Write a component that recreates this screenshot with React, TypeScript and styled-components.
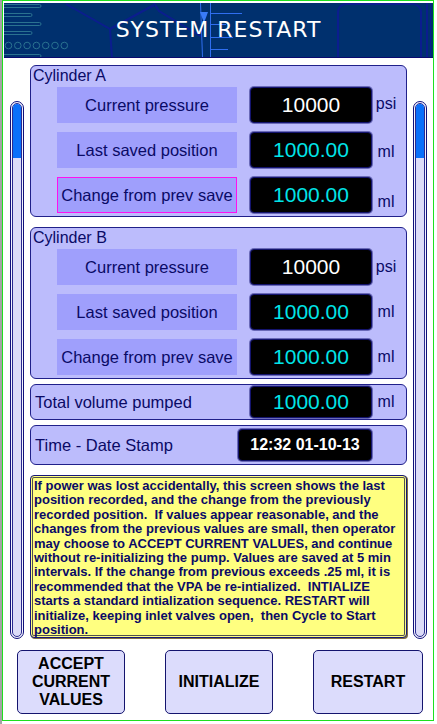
import React from "react"
import styled, { createGlobalStyle } from "styled-components"

const GlobalStyle = createGlobalStyle`
	html, body {
		margin: 0;
		padding: 0;
		background: #ffffff;
	}
	body {
		font-family: "Liberation Sans", Arial, sans-serif;
	}
	* {
		box-sizing: border-box;
	}
`

const NAVY = "#0a0a66"

type Row = {
	label: string
	value: string
	unit: string
	kind: "pressure" | "volume"
	highlight?: boolean
	drop?: number
}

const cylinderA: Row[] = [
	{ label: "Current pressure", value: "10000", unit: "psi", kind: "pressure", drop: -2 },
	{ label: "Last saved position", value: "1000.00", unit: "ml", kind: "volume", drop: 3 },
	{ label: "Change from prev save", value: "1000.00", unit: "ml", kind: "volume", highlight: true, drop: 14 },
]

const cylinderB: Row[] = [
	{ label: "Current pressure", value: "10000", unit: "psi", kind: "pressure" },
	{ label: "Last saved position", value: "1000.00", unit: "ml", kind: "volume" },
	{ label: "Change from prev save", value: "1000.00", unit: "ml", kind: "volume" },
]

const noteLines = [
	"If power was lost accidentally, this screen shows the last",
	"position recorded, and the change from the previously",
	"recorded position.  If values appear reasonable, and the",
	"changes from the previous values are small, then operator",
	"may choose to ACCEPT CURRENT VALUES, and continue",
	"without re-initializing the pump. Values are saved at 5 min",
	"intervals. If the change from previous exceeds .25 ml, it is",
	"recommended that the VPA be re-intialized.  INTIALIZE",
	"starts a standard intialization sequence. RESTART will",
	"initialize, keeping inlet valves open,  then Cycle to Start",
	"position.",
]

const HeaderArt = () => (
	<svg width="429" height="54" viewBox="0 0 429 54">
		<g fill="none" stroke="#2a7290" strokeWidth="1">
			<rect x="-3" y="1.5" width="40" height="3" rx="1.5" />
			<rect x="-3" y="10.5" width="31" height="3" rx="1.5" />
			<rect x="-3" y="19.5" width="40" height="3" rx="1.5" />
			<rect x="-3" y="28.5" width="31" height="3" rx="1.5" />
			{[0, 1, 2, 3, 4, 5, 6].map((i) => (
				<circle key={i} cx={4.5 + i * 9.3} cy={42.5} r={3.3} />
			))}
			<rect x="-3" y="51.5" width="40" height="3" rx="1.5" />
		</g>
		<g fill="none" stroke="#0b1d8e" strokeWidth="2">
			<polyline points="62,1 106,26 108,55" />
			<polyline points="150,0 155,8 198,34" />
			<polyline points="106,26 150,2" />
			<rect x="334" y="1" width="83" height="60" rx="8" />
			<line x1="423" y1="0" x2="423" y2="54" />
			<line x1="426.5" y1="0" x2="426.5" y2="54" strokeWidth="1" />
		</g>
		<g stroke="#2f6ef0" strokeWidth="1" fill="none">
			<line x1="196.5" y1="0" x2="198.5" y2="54" />
			<line x1="206.5" y1="0" x2="206.5" y2="54" />
			<line x1="207" y1="10.5" x2="238" y2="10.5" />
			<line x1="207" y1="21.5" x2="222" y2="21.5" />
			<line x1="207" y1="34.5" x2="229" y2="34.5" />
			<line x1="207" y1="46.5" x2="224" y2="46.5" />
		</g>
		<polygon points="196,9 204,9 200,20" fill="#3a7cf8" />
	</svg>
)

const Cylinder = ({ title, rows }: { title: string; rows: Row[] }) => (
	<CylinderPanel>
		<PanelTitle>{title}</PanelTitle>
		<Rows>
			{rows.map((r) => (
				<ReadingRow key={r.label}>
					<LabelBox $highlight={r.highlight}>{r.label}</LabelBox>
					<ValueBox $width={122} $color={r.kind === "pressure" ? "#ffffff" : "#00e4e8"}>
						{r.value}
					</ValueBox>
					<Unit $drop={r.drop ?? 0}>{r.unit}</Unit>
				</ReadingRow>
			))}
		</Rows>
	</CylinderPanel>
)

export default function App() {
	return (
		<>
			<GlobalStyle />
			<Page>
				<Frame>
					<Header>
						<HeaderArt />
						<HeaderTitle>SYSTEM RESTART</HeaderTitle>
					</Header>
					<Body>
						<Scrollbar>
							<Track>
								<Thumb />
							</Track>
						</Scrollbar>
						<Content>
							<Cylinder title="Cylinder A" rows={cylinderA} />
							<Cylinder title="Cylinder B" rows={cylinderB} />
							<SummaryPanel $pad={1} $gap={5}>
								<SummaryLabel>Total volume pumped</SummaryLabel>
								<ValueBox $width={122} $color="#00e4e8">
									1000.00
								</ValueBox>
								<Unit $drop={0}>ml</Unit>
							</SummaryPanel>
							<SummaryPanel $pad={3} $gap={5}>
								<SummaryLabel>Time - Date Stamp</SummaryLabel>
								<StampBox>12:32 01-10-13</StampBox>
								<Unit $drop={0} />
							</SummaryPanel>
							<Note>
								{noteLines.map((line, i) => (
									<NoteLine key={i}>{line}</NoteLine>
								))}
							</Note>
						</Content>
						<Scrollbar>
							<Track>
								<Thumb />
							</Track>
						</Scrollbar>
					</Body>
					<ButtonRow>
						<ActionButton $width={108}>
							ACCEPT
							<br />
							CURRENT
							<br />
							VALUES
						</ActionButton>
						<ActionButton $width={108}>INITIALIZE</ActionButton>
						<ActionButton $width={110}>RESTART</ActionButton>
					</ButtonRow>
				</Frame>
			</Page>
		</>
	)
}

const Page = styled.div`
	width: 437px;
	height: 724px;
	border-left: 2px solid #a4a4a4;
	background: #ffffff;
`

const Frame = styled.div`
	width: 432px;
	height: 721px;
	border: 1px solid #1ee01e;
	display: flex;
	flex-direction: column;
`

const Header = styled.div`
	display: grid;
	width: 429px;
	height: 55px;
	margin: 2px 0 0 1px;
	background: #00306e;
	border-bottom: 1px solid #0a0a70;
	overflow: hidden;

	& > * {
		grid-area: 1 / 1;
	}
`

const HeaderTitle = styled.div`
	align-self: center;
	justify-self: center;
	font-family: "DejaVu Sans", Verdana, sans-serif;
	font-size: 22px;
	letter-spacing: 1px;
	color: #ffffff;
	line-height: 1;
`

const Body = styled.div`
	display: flex;
	align-items: flex-start;
	gap: 6px;
	margin-top: 7px;
	padding-left: 7px;
`

const Scrollbar = styled.div`
	width: 14px;
	height: 538px;
	margin-top: 36px;
	border: 1px solid #10107a;
	border-radius: 7px;
	background: #f4f4ff;
	padding: 1px;
`

const Track = styled.div`
	height: 100%;
	border: 1px solid #2a2a90;
	border-radius: 5px;
	background: #dcdcf8;
	overflow: hidden;
`

const Thumb = styled.div`
	height: 54px;
	background: #0a70fa;
`

const Content = styled.div`
	width: 377px;
	display: flex;
	flex-direction: column;
`

const Panel = styled.div`
	background: #bcbcfc;
	border: 1px solid #20208a;
	border-radius: 6px;
	color: ${NAVY};
`

const CylinderPanel = styled(Panel)`
	padding: 1px 6px 3px 2px;
	margin-bottom: 10px;

	& + & {
		margin-bottom: 5px;
	}
`

const PanelTitle = styled.div`
	font-size: 16px;
	line-height: 18px;
	margin-bottom: 2px;
`

const Rows = styled.div`
	display: flex;
	flex-direction: column;
	gap: 9px;
	padding-left: 24px;
`

const ReadingRow = styled.div`
	display: flex;
	align-items: stretch;
	height: 36px;
`

const LabelBox = styled.div<{ $highlight?: boolean }>`
	width: 180px;
	margin-right: 13px;
	display: flex;
	align-items: center;
	justify-content: center;
	background: #9f9ffc;
	border: 1px solid ${(p) => (p.$highlight ? "#ff10f0" : "#9f9ffc")};
	font-size: 16.5px;
	white-space: nowrap;
`

const ValueBox = styled.div<{ $width: number; $color: string }>`
	width: ${(p) => p.$width}px;
	display: flex;
	align-items: center;
	justify-content: center;
	background: #000000;
	border: 1px solid #14146e;
	border-radius: 4px;
	box-shadow: 0 0 0 1px #6a6ab8;
	color: ${(p) => p.$color};
	font-size: 21px;
`

const Unit = styled.div<{ $drop: number }>`
	width: 28px;
	display: flex;
	align-items: center;
	justify-content: center;
	font-size: 16px;
	line-height: 18px;
	padding-top: ${(p) => Math.max(p.$drop, 0)}px;
	padding-bottom: ${(p) => Math.max(-p.$drop, 0)}px;
`

const SummaryPanel = styled(Panel)<{ $pad: number; $gap: number }>`
	display: flex;
	align-items: stretch;
	height: ${(p) => 34 + p.$pad * 2}px;
	padding: ${(p) => p.$pad}px 6px ${(p) => p.$pad}px 4px;
	margin-bottom: ${(p) => p.$gap}px;
`

const SummaryLabel = styled.div`
	flex: 1;
	display: flex;
	align-items: center;
	font-size: 16.5px;
`

const StampBox = styled(ValueBox).attrs({ $width: 134, $color: "#ffffff" })`
	font-size: 16px;
	font-weight: bold;
`

const Note = styled.div`
	height: 163px;
	margin-top: 5px;
	padding: 3px 2px 0 3px;
	background: #ffff80;
	border: 1px solid #16167a;
	border-radius: 4px;
	box-shadow: inset 0 0 0 1px #ffff80, inset 0 0 0 2px #505050, 1px 1px 0 #807040;
	color: ${NAVY};
	font-size: 13px;
	font-weight: bold;
	line-height: 14.4px;
`

const NoteLine = styled.div`
	white-space: pre;
`

const ButtonRow = styled.div`
	display: flex;
	justify-content: space-between;
	margin-top: 11px;
	padding: 0 10px 0 14px;
`

const ActionButton = styled.button<{ $width: number }>`
	width: ${(p) => p.$width}px;
	height: 64px;
	padding: 0;
	background: #dcdcfc;
	border: 1px solid #14146e;
	border-radius: 5px;
	font-family: "Liberation Sans", Arial, sans-serif;
	font-size: 16px;
	font-weight: bold;
	line-height: 18px;
	color: #000000;
	cursor: pointer;
`
